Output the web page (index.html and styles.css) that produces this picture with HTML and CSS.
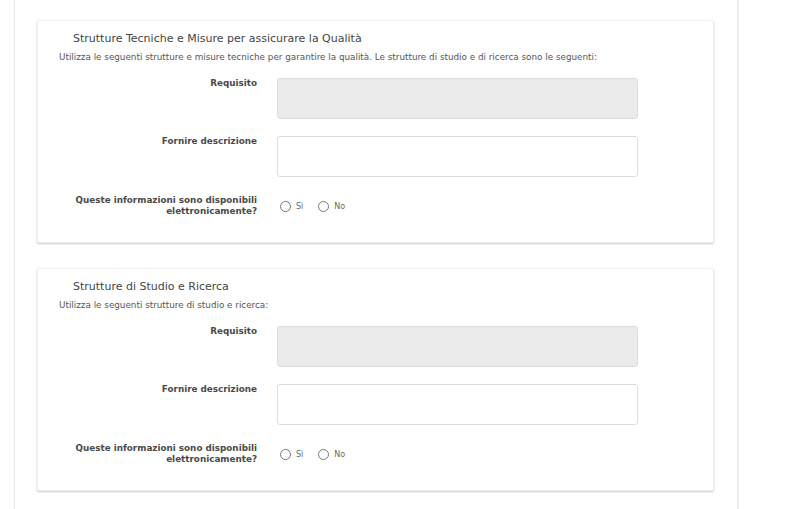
FILE: index.html
```html
<!DOCTYPE html>
<html lang="it">
<head>
<meta charset="utf-8">
<title>Strutture</title>
<link rel="stylesheet" href="styles.css">
</head>
<body>
<div class="page">
  <main class="column">
    <section class="card">
      <h2 class="card-title">Strutture Tecniche e Misure per assicurare la Qualità</h2>
      <p class="card-sub">Utilizza le seguenti strutture e misure tecniche per garantire la qualità. Le strutture di studio e di ricerca sono le seguenti:</p>
      <div class="row">
        <label class="lbl">Requisito</label>
        <div class="box box-ro"></div>
      </div>
      <div class="row">
        <label class="lbl">Fornire descrizione</label>
        <div class="box"></div>
      </div>
      <div class="row row-radio">
        <label class="lbl">Queste informazioni sono disponibili elettronicamente?</label>
        <div class="radios">
          <span class="radio"><span class="dot"></span>Sì</span>
          <span class="radio"><span class="dot"></span>No</span>
        </div>
      </div>
    </section>
    <section class="card">
      <h2 class="card-title">Strutture di Studio e Ricerca</h2>
      <p class="card-sub">Utilizza le seguenti strutture di studio e ricerca:</p>
      <div class="row">
        <label class="lbl">Requisito</label>
        <div class="box box-ro"></div>
      </div>
      <div class="row">
        <label class="lbl">Fornire descrizione</label>
        <div class="box"></div>
      </div>
      <div class="row row-radio">
        <label class="lbl">Queste informazioni sono disponibili elettronicamente?</label>
        <div class="radios">
          <span class="radio"><span class="dot"></span>Sì</span>
          <span class="radio"><span class="dot"></span>No</span>
        </div>
      </div>
    </section>
  </main>
</div>
</body>
</html>
```
FILE: styles.css
```css
html, body {
  margin: 0;
  padding: 0;
  background: #fff;
  font-family: "DejaVu Sans", Verdana, sans-serif;
  color: #555;
}
.page {
  padding-left: 14px;
  height: 509px;
  overflow: hidden;
}
.column {
  width: 677px;
  border-left: 1px solid #e6e6e6;
  border-right: 2px solid #ececec;
  padding: 20px 23px 0 22px;
  min-height: 509px;
  box-sizing: content-box;
}
.card {
  border: 1px solid #f0f0f0;
  border-radius: 2px;
  box-shadow: 0 1px 2px rgba(0,0,0,0.22);
  padding: 11px 20px 25px 21px;
  margin-bottom: 25px;
  background: #fff;
}
.card-title {
  margin: 0 0 5px 14px;
  font-size: 11px;
  line-height: 14px;
  font-weight: normal;
  color: #444;
  white-space: nowrap;
}
.card-sub {
  margin: 0 0 15px;
  font-size: 8.8px;
  line-height: 12px;
  color: #555;
  white-space: nowrap;
}
.row {
  display: flex;
  gap: 20px;
  margin-bottom: 17px;
}
.row-radio {
  margin-bottom: 0;
  margin-top: 18px;
  align-items: center;
}
.lbl {
  width: 198px;
  text-align: right;
  font-size: 8.8px;
  line-height: 11px;
  font-weight: bold;
  color: #4a4a4a;
  flex: none;
}
.box {
  width: 359px;
  height: 39px;
  border: 1px solid #dcdcdc;
  border-radius: 3px;
  background: #fff;
}
.box-ro {
  background: #ebebeb;
}
.radios {
  display: flex;
  gap: 12px;
  align-items: center;
  font-size: 8px;
  color: #666;
}
.radio {
  display: inline-flex;
  align-items: center;
  gap: 5px;
  padding-left: 3px;
}
.dot {
  width: 9px;
  height: 9px;
  border: 1px solid #777;
  border-radius: 50%;
  display: inline-block;
}
```
